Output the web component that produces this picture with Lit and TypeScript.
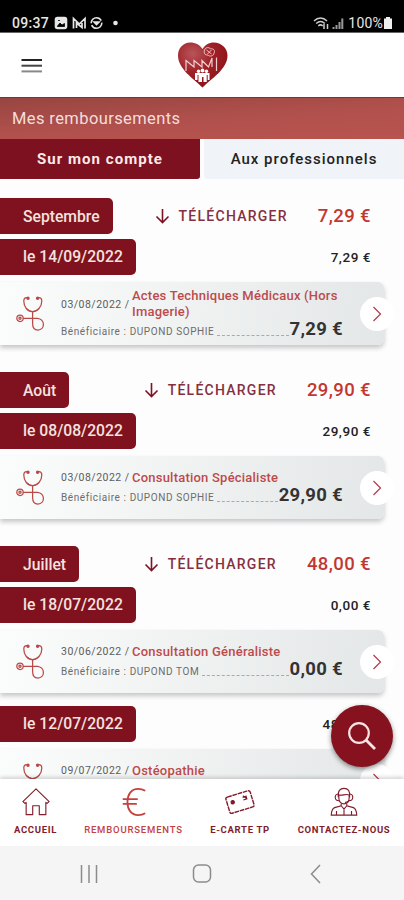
import { LitElement, html, svg, css } from "lit";
import { customElement, property } from "lit/decorators.js";

interface Care {
  date: string;
  title: string;
  who: string;
  amount: string;
}
interface Day {
  label: string;
  total: string;
  care: Care;
}
interface Month {
  label: string;
  total: string;
  days: Day[];
}

const months: Month[] = [
  {
    label: "Septembre",
    total: "7,29 €",
    days: [
      {
        label: "le 14/09/2022",
        total: "7,29 €",
        care: { date: "03/08/2022 /", title: "Actes Techniques Médicaux (Hors Imagerie)", who: "DUPOND SOPHIE", amount: "7,29 €" },
      },
    ],
  },
  {
    label: "Août",
    total: "29,90 €",
    days: [
      {
        label: "le 08/08/2022",
        total: "29,90 €",
        care: { date: "03/08/2022 /", title: "Consultation Spécialiste", who: "DUPOND SOPHIE", amount: "29,90 €" },
      },
    ],
  },
  {
    label: "Juillet",
    total: "48,00 €",
    days: [
      {
        label: "le 18/07/2022",
        total: "0,00 €",
        care: { date: "30/06/2022 /", title: "Consultation Généraliste", who: "DUPOND TOM", amount: "0,00 €" },
      },
      {
        label: "le 12/07/2022",
        total: "48,00 €",
        care: { date: "09/07/2022 /", title: "Ostéopathie", who: "", amount: "" },
      },
    ],
  },
];

const stethoscope = html`<svg width="30" height="36" viewBox="0 0 30 36" fill="none" stroke="#b94a48" stroke-width="1.25" stroke-linecap="round">
  <path d="M11.5 1.8 C9 1.2 7.8 2.6 7.8 5 C7.8 11 11.5 15.5 16.5 15.5 C21.500 15.500 25.800 11 25.800 5 C25.800 2.600 24.400 1.200 22 1.800" />
  <path d="M11.500 13 C14 16.800 19.500 16.800 22 13" stroke-width="1" />
  <circle cx="12" cy="2.200" r="1.100" fill="#b94a48" /><circle cx="21.600" cy="2.200" r="1.100" fill="#b94a48" />
  <path d="M16.600 15.500 V27.500 C16.600 32 19 34 22 34 C25.300 34 27.400 31.600 27.400 28.600 C27.400 25 24.800 22.600 21.500 22.300 H7.500" />
  <circle cx="4" cy="22.300" r="3.200" /><circle cx="4" cy="22.300" r="1.100" />
</svg>`;

@customElement("care-card")
class CareCard extends LitElement {
  @property({ attribute: false }) care!: Care;

  static styles = css`
    :host { display: block; }
    .card {
      display: flex;
      align-items: center;
      box-sizing: border-box;
      width: 384px;
      height: 63px;
      padding-left: 16px;
      border-radius: 0 6px 6px 0;
      background: linear-gradient(95deg, #fbfcfc 0%, #f1f3f3 45%, #e4e7e7 100%);
      box-shadow: 0 3px 5px rgba(0, 0, 0, 0.22);
    }
    .icon { display: flex; width: 45px; flex: none; margin-top: 1px; }
    .body { width: 282px; flex: none; display: flex; flex-direction: column; }
    .top { display: flex; align-items: center; height: 17px; }
    .top.tall { height: 33px; }
    .date { width: 71px; flex: none; font-size: 10.5px; letter-spacing: 0.48px; color: #5c5c5c; white-space: nowrap; }
    .title { font-size: 13px; line-height: 16px; font-weight: 500; letter-spacing: 0.22px; color: #bd4a4c; }
    .bottom { display: flex; align-items: flex-end; height: 21px; margin-top: -1px; white-space: nowrap; }
    .tall + .bottom { height: 20px; }
    .who { font-size: 10px; line-height: 15px; letter-spacing: 0.59px; color: #6c6c6c; padding-bottom: 1px; }
    .dots { flex: 1; border-bottom: 1px dashed #aaa; margin: 0 1px 4px 3px; }
    .amount { font-size: 18.5px; line-height: 20px; font-weight: 700; letter-spacing: 0.3px; color: #333; padding-bottom: 1px; }
    .go {
      display: flex;
      align-items: center;
      justify-content: center;
      width: 34px;
      height: 34px;
      flex: none;
      margin-left: 17px;
      border-radius: 50%;
      background: #fff;
    }
  `;

  render() {
    const c = this.care;
    return html`<div class="card">
      <div class="icon">${stethoscope}</div>
      <div class="body">
        <div class="top ${c.title.length > 30 ? "tall" : ""}">
          <span class="date">${c.date}</span><span class="title">${c.title}</span>
        </div>
        <div class="bottom">
          ${c.who
            ? html`<span class="who">Bénéficiaire : ${c.who}</span><span class="dots"></span><span class="amount">${c.amount}</span>`
            : ""}
        </div>
      </div>
      <div class="go">
        <svg width="10" height="16" viewBox="0 0 10 16" fill="none" stroke="#b5384a" stroke-width="1.2"><path d="M1.500 1 L8.500 8 L1.500 15" /></svg>
      </div>
    </div>`;
  }
}

const home = svg`<path d="M2 15.500 L16 2 L30 15.500 L27.800 17.500 L26.500 16.500 V29.500 H19.500 V20 H12.500 V29.500 H5.500 V16.500 L4.200 17.500 Z" stroke-linejoin="round"/>`;
const card = svg`<g transform="rotate(-17 16 16)"><rect x="2.500" y="7" width="27" height="18" rx="2" stroke-width="1.500" stroke-dasharray="5 .8"/><circle cx="8.500" cy="14" r="1.800" fill="currentColor"/><path d="M20 12 h4 v3 h-4 m1 -4.500 l3 4.500"/></g>`;
const agent = svg`<path d="M10 11 C9 4 12 1.500 16 1.500 C20 1.500 23 4 22 11"/><path d="M10.500 8.500 C14 9.500 18 7 21.500 8.500 V12 C21.500 15.500 19 18 16 18 C13 18 10.500 15.500 10.500 12 Z"/><path d="M9.800 7.500 C5.500 8 5.500 14.500 10.500 14.500 M22.200 7.500 C26.500 8 26.500 14.500 21.500 14.500 C20.500 16 19 16.500 17 16.300"/><path d="M13 17.500 V20 L6 22 C3.500 23 2.600 26 2.400 30 H29.600 C29.400 26 28.500 23 26 22 L19 20 V17.500 M13 20 L16 23.500 L19 20 M16 23.500 V30 M8 25.500 V30 M24 25.500 V30"/>`;
const euro = svg`<path d="M28 4 C25 2.300 23 2 20.500 2 C13 2 9 8 9 16 C9 24 13 30 20.500 30 C23.500 30 25.500 29.500 28 28 M4 13 H20 M4 18 H19" stroke-width="1.900"/>`;

@customElement("app-root")
class AppRoot extends LitElement {
  static styles = css`
    :host { display: block; font-family: Roboto, "Liberation Sans", sans-serif; color: #222; }
    .screen { display: flex; flex-direction: column; width: 404px; height: 900px; overflow: hidden; background: #fdfdfd; }
    .status {
      display: flex; align-items: center; box-sizing: border-box; height: 33px; flex: none;
      padding: 13px 11px 0 12px; background: #000; color: #e6e6e6; font-size: 14px; border-bottom: 1px solid #666;
    }
    .clock { width: 42px; letter-spacing: 0.3px; font-weight: 500; }
    .signals { margin-left: auto; display: flex; align-items: center; }
    .percent { margin-left: 4px; letter-spacing: 0.2px; }
    .header { display: grid; grid-template-columns: 1fr 56px 1fr; align-items: center; height: 64px; flex: none; background: #fff; }
    .burger { margin-left: 21px; display: flex; padding-top: 1px; }
    .logo { display: flex; justify-content: center; }
    .title {
      box-sizing: border-box; height: 42px; flex: none; padding: 0 12px; line-height: 41px; font-size: 16.5px; letter-spacing: 0.4px;
      color: #f5dedb; background: linear-gradient(176deg, #984541 0%, #b0504c 50%, #b95450 100%); border-top: 1px solid #8a2e2c;
    }
    .tabs { display: flex; gap: 4px; height: 40px; flex: none; }
    .tab { display: flex; align-items: center; justify-content: center; width: 200px; font-size: 15px; font-weight: 500; letter-spacing: 1px; padding-bottom: 1px; box-sizing: border-box; }
    .tab.on { background: #7d111f; color: #fbe9ea; font-weight: 700; border-radius: 0 0 3px 0; letter-spacing: 1.05px; }
    .tab.off { background: #f0f3f7; border-radius: 0 0 0 4px; }
    .list { flex: 1; min-height: 0; overflow: hidden; padding-top: 19px; }
    .month { margin-bottom: 27px; }
    .row { display: flex; align-items: center; height: 36px; }
    .day { padding-top: 4.5px; }
    .day + .day { padding-top: 12.5px; }
    .tag {
      display: flex; align-items: center; height: 36px; box-sizing: border-box; padding: 0 13px 0 23px; border-radius: 0 5px 5px 0;
      background: #80121f; color: #f4e2df; font-size: 15.700px; font-weight: 500; white-space: nowrap;
    }
    .download { margin-left: auto; display: flex; align-items: center; gap: 9px; font-size: 14px; letter-spacing: 1.25px; font-weight: 500; color: #85303f; }
    .total { margin: 0 33px 0 30px; font-size: 18.5px; letter-spacing: 0.4px; font-weight: 500; color: #c2372f; }
    .sum { margin: 0 33px 0 auto; font-size: 13.5px; letter-spacing: 0.55px; font-weight: 500; color: #222; }
    .card { display: block; margin-top: 7.500px; }
    .dock { position: relative; display: flex; height: 67px; flex: none; box-sizing: border-box; background: #fff; box-shadow: 0 -2px 4px rgba(0, 0, 0, 0.16); color: #801c2c; }
    .item { display: flex; flex-direction: column; align-items: center; padding-top: 8px; gap: 7px; font-size: 9.500px; line-height: 12px; letter-spacing: 0.68px; font-weight: 700; white-space: nowrap; }
    .item.active { color: #c5403f; font-weight: 500; letter-spacing: 0.82px; }
    .w1 { width: 71px; } .w2 { width: 125px; } .w3 { width: 88px; } .w4 { width: 120px; }
    .fab {
      position: absolute; left: 331px; top: -74px; width: 62px; height: 62px; border-radius: 50%; background: #86121f;
      display: flex; align-items: center; justify-content: center; box-shadow: 0 2px 5px rgba(0, 0, 0, 0.45);
    }
    .system { position: relative; display: grid; grid-template-columns: 177px 50px 177px; align-items: center; justify-items: center; height: 54px; flex: none; background: #f5f5f5; }
    .recent { padding-top: 2px; display: flex; }
    .back { padding-top: 2px; display: flex; }
  `;

  private nav(cls: string, glyph: unknown, label: string) {
    return html`<div class="item ${cls}">
      <svg width="30" height="30" viewBox="0 0 32 32" fill="none" stroke="currentColor" stroke-width="1.200">${glyph}</svg>
      <span>${label}</span>
    </div>`;
  }

  render() {
    return html`<div class="screen">
      <div class="status">
        <span class="clock">09:37</span>
        <svg width="68" height="14" viewBox="0 0 68 14" fill="none" stroke="#e6e6e6" stroke-width="1.600">
          <rect x="1.500" y="1.500" width="11" height="11" rx="2" fill="#e6e6e6" /><path d="M3.500 10 L6 7 L8 9 L10.500 7.500 V10.500 H3.500 Z M4 4.500 h2" fill="#000" stroke="#000" stroke-width=".8" />
          <path d="M19.500 12.500 V2.500 L25.300 8 L31 2.500 V12.500 M22.500 12 V7 L28 11.500 V7" stroke-width="1.700" />
          <circle cx="42.500" cy="7" r="5.300" stroke-dasharray="14 2" /><path d="M40 6 L42.500 8.500 L45 6 Z" fill="#e6e6e6" />
          <circle cx="61.500" cy="7" r="2.300" fill="#e6e6e6" stroke="none" />
        </svg>
        <div class="signals">
          <svg width="31" height="14" viewBox="0 0 31 14" fill="none" stroke="#ccc" stroke-width="1.500">
            <path d="M1 5 C5 1 10 1 14 5 M3.200 7.500 C6 5 9 5 11.800 7.500 M5.300 9.800 C6.500 8.800 8.500 8.800 9.700 9.800 M11 8 V13 M14.500 8 V13" />
            <path d="M20.500 13 V11 M23.500 13 V9 M26.500 13 V6 M29.300 13 V2.500" stroke="#999" stroke-width="2" />
          </svg>
          <span class="percent">100%</span>
          <svg width="10" height="14" viewBox="0 0 10 14" fill="#eee"><path d="M3 1 h4 v1.500 h2 v10.500 h-8 v-10.500 h2 Z" /></svg>
        </div>
      </div>

      <div class="header">
        <div class="burger">
          <svg width="22" height="16" viewBox="0 0 22 16" stroke-width="2"><path d="M.5 2 H21" stroke="#222" /><path d="M.5 7.700 H21" stroke="#444" /><path d="M.5 13.400 H21" stroke="#888" /></svg>
        </div>
        <div class="logo">
          <svg width="52" height="48" viewBox="0 0 52 48">
            <defs><radialGradient id="heart" cx=".3" cy=".25" r=".8"><stop offset="0" stop-color="#b8555a" /><stop offset=".5" stop-color="#9f2127" /><stop offset="1" stop-color="#8c1218" /></radialGradient></defs>
            <path d="M26.500 46.500 C18 38 2 28 2 14.500 C2 7 7.500 1.500 14 1.500 C19.500 1.500 24.500 4.200 26.500 8 C28.500 4.200 33 1.500 38 1.500 C45 1.500 51.500 7 51.500 14.500 C51.500 28 35 38 26.500 46.500 Z" fill="url(#heart)" />
            <g fill="none" stroke="#f2cfd0" stroke-width="1.200">
              <path d="M10 30 V19.500 L18 26 V19.500 L26 26 V19.500 L32.500 26 L36 17 V26 M40.500 16.500 V30" />
              <path d="M28.500 9 C29.500 6 33.500 6 34.500 8 C37.500 7 39.500 10 38 12 C38 15 33.500 16 32 14 C29 14.500 27.500 12 28.500 9 Z M30.500 9 L35.500 13 M35.500 9 L31.500 13" stroke-width=".9" />
            </g>
            <g fill="#fff"><circle cx="22.500" cy="30.300" r="1.700" /><circle cx="26.500" cy="29.500" r="1.900" /><circle cx="30.500" cy="30.300" r="1.700" /><path d="M19 32 h14.500 v7 h-1.800 v-5 h-1 v7 h-3.200 v-5 h-1.500 v5 h-3.500 v-7 h-1 v5 h-2.500 Z" /></g>
          </svg>
        </div>
      </div>

      <div class="title">Mes remboursements</div>
      <div class="tabs"><div class="tab on">Sur mon compte</div><div class="tab off">Aux professionnels</div></div>

      <div class="list">
        ${months.map(
          (m) => html`<div class="month">
            <div class="row">
              <div class="tag">${m.label}</div>
              <div class="download">
                <svg width="15" height="16" viewBox="0 0 15 16" fill="none" stroke="#7d1222" stroke-width="1.600"><path d="M7.500 1 V14 M1.500 8.500 L7.500 14.500 L13.500 8.500" /></svg>
                <span>TÉLÉCHARGER</span>
              </div>
              <div class="total">${m.total}</div>
            </div>
            ${m.days.map(
              (d) => html`<div class="day">
                <div class="row"><div class="tag">${d.label}</div><div class="sum">${d.total}</div></div>
                <care-card class="card" .care=${d.care}></care-card>
              </div>`,
            )}
          </div>`,
        )}
      </div>

      <div class="dock">
        ${this.nav("w1", home, "ACCUEIL")} ${this.nav("w2 active", euro, "REMBOURSEMENTS")}
        ${this.nav("w3", card, "E-CARTE TP")} ${this.nav("w4", agent, "CONTACTEZ-NOUS")}
        <div class="fab">
          <svg width="30" height="30" viewBox="0 0 30 30" fill="none" stroke="#f8e4e2" stroke-width="2.200"><circle cx="12" cy="12" r="9.800" /><path d="M19 19 L28 28" stroke-width="2.800" /></svg>
        </div>
      </div>

      <div class="system">
        <div class="recent"><svg width="18" height="18" viewBox="0 0 18 18" stroke="#8c8c8c" stroke-width="1.500"><path d="M1.500 0 V18 M9 0 V18 M16.500 0 V18" /></svg></div>
        <svg width="20" height="20" viewBox="0 0 20 20" fill="none" stroke="#8c8c8c" stroke-width="1.500"><rect x="1.500" y="2" width="17" height="17" rx="5" /></svg>
        <div class="back"><svg width="11" height="20" viewBox="0 0 11 20" fill="none" stroke="#8c8c8c" stroke-width="1.500"><path d="M10 1 L1.500 10 L10 19" /></svg></div>
      </div>
    </div>`;
  }
}
